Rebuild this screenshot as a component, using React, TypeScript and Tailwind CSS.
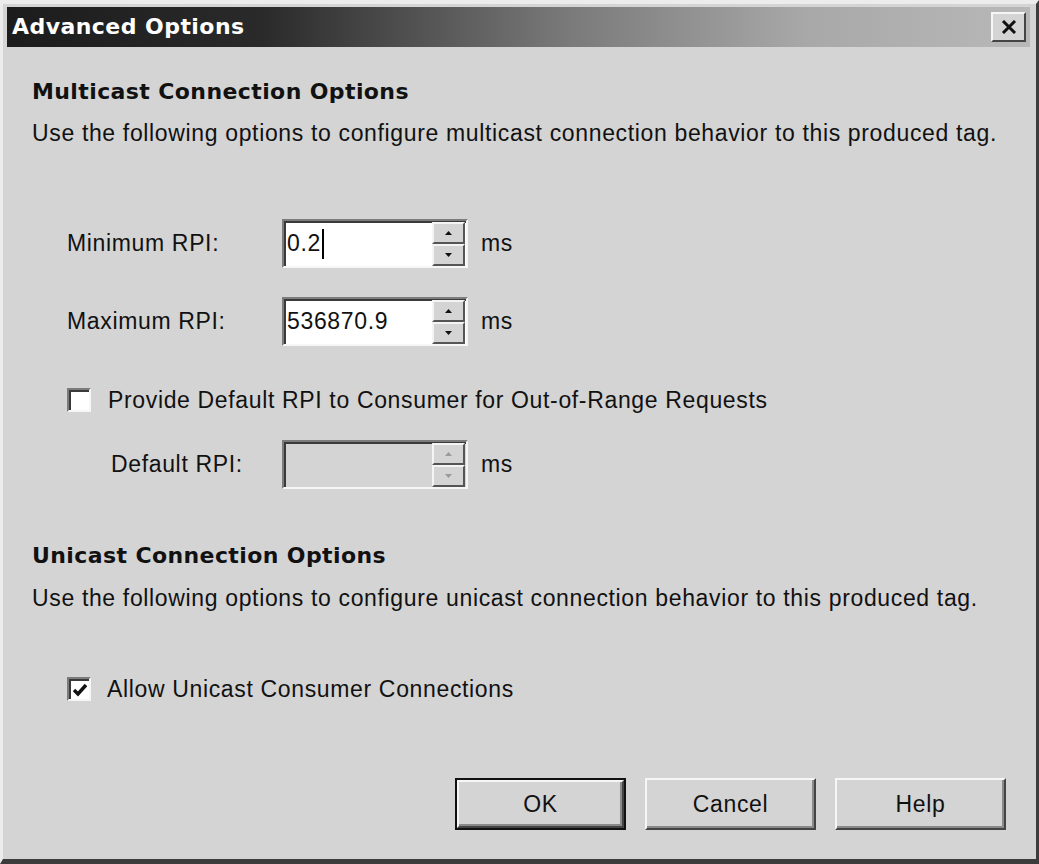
const sans = "font-['Liberation_Sans',Arial,sans-serif] tracking-[0.65px]";
const bold = "font-['DejaVu_Sans',Verdana,sans-serif] font-bold tracking-[0.4px]";

function SpinButton({ up, disabled }: { up?: boolean; disabled?: boolean }) {
  return (
    <div className="flex h-[22px] w-[33px] items-center justify-center border-2 border-t-[#f4f4f4] border-l-[#f4f4f4] border-r-[#555] border-b-[#555] bg-[#d4d4d4]">
      <svg width="7" height="4" viewBox="0 0 7 4">
        {up ? (
          <polygon points="3.5,0 7,4 0,4" fill={disabled ? "#9a9a9a" : "#111"} />
        ) : (
          <polygon points="0,0 7,0 3.5,4" fill={disabled ? "#9a9a9a" : "#111"} />
        )}
      </svg>
    </div>
  );
}

function SpinInput({ value, caret, disabled }: { value?: string; caret?: boolean; disabled?: boolean }) {
  return (
    <div
      className={`flex h-[49px] w-[186px] items-center border-2 border-t-[#7c7c7c] border-l-[#7c7c7c] border-r-[#f6f6f6] border-b-[#f6f6f6] shadow-[inset_2px_2px_0_#3a3a3a] ${
        disabled ? "bg-[#d4d4d4]" : "bg-white"
      }`}
    >
      <div className={`flex flex-1 items-center pl-[3px] text-[23px] text-[#111] ${sans}`}>
        {value}
        {caret && <span className="ml-[1px] h-[30px] w-[2px] bg-black" />}
      </div>
      <div className="mr-[1px] flex flex-col">
        <SpinButton up disabled={disabled} />
        <SpinButton disabled={disabled} />
      </div>
    </div>
  );
}

function Checkbox({ checked }: { checked?: boolean }) {
  return (
    <div className="flex h-[24px] w-[24px] items-center justify-center border-2 border-t-[#7c7c7c] border-l-[#7c7c7c] border-r-[#f6f6f6] border-b-[#f6f6f6] bg-white shadow-[inset_2px_2px_0_#3a3a3a]">
      {checked && (
        <svg width="16" height="14" viewBox="0 0 16 14" className="ml-[1px] mt-[1px]">
          <path d="M2 7 L6 11 L14 2" fill="none" stroke="#111" strokeWidth="3.4" />
        </svg>
      )}
    </div>
  );
}

function Button({ label, isDefault }: { label: string; isDefault?: boolean }) {
  return (
    <div className={`h-[52px] w-[171px] ${isDefault ? "border-2 border-[#111]" : ""}`}>
      <div className="flex h-full w-full items-center justify-center border-2 border-t-[#f6f6f6] border-l-[#f6f6f6] border-r-[#444] border-b-[#444] bg-[#d4d4d4] shadow-[inset_-2px_-2px_0_#8a8a8a]">
        <span className={`text-[23px] text-[#111] ${sans}`}>{label}</span>
      </div>
    </div>
  );
}

export default function App() {
  return (
    <div className="h-[864px] w-[1039px] overflow-hidden border-t-[4px] border-l-[3px] border-r-[3px] border-b-[5px] border-t-[#ececec] border-l-[#ececec] border-r-[#3c3c3c] border-b-[#3c3c3c] bg-[#d4d4d4]">
      <div className="flex h-full flex-col bg-[#d4d4d4]">
        {/* Title bar */}
        <div className="mx-[4px] mt-[3px] flex h-[40px] w-[1023px] items-center justify-between bg-[linear-gradient(to_right,#1c1c1c_0%,#2a2a2a_25%,#7a7a7a_55%,#a8a8a8_78%,#b8b8b8_100%)] pl-[5px] pr-[4px]">
          <span className="font-['DejaVu_Sans',Verdana,sans-serif] text-[22px] font-bold leading-none tracking-[0.45px] text-white">
            Advanced Options
          </span>
          <div className="flex h-[30px] w-[35px] items-center justify-center border-2 border-t-[#f6f6f6] border-l-[#f6f6f6] border-r-[#444] border-b-[#444] bg-[#d4d4d4]">
            <svg width="16" height="14" viewBox="0 0 16 14">
              <path d="M2 1 L14 13 M14 1 L2 13" stroke="#111" strokeWidth="3" />
            </svg>
          </div>
        </div>

        {/* Body */}
        <div className="flex flex-col pl-[29px] pt-[32px] text-[#111]">
          <div className={`h-[26px] text-[22px] leading-[26px] ${bold}`}>Multicast Connection Options</div>
          <div className={`mt-[15px] h-[26px] text-[23px] leading-[26px] ${sans}`}>
            Use the following options to configure multicast connection behavior to this produced tag.
          </div>

          <div className={`mt-[73px] flex h-[49px] items-center text-[23px] ${sans}`}>
            <span className="ml-[35px] w-[215px]">Minimum RPI:</span>
            <SpinInput value="0.2" caret />
            <span className="ml-[13px]">ms</span>
          </div>

          <div className={`mt-[29px] flex h-[49px] items-center text-[23px] ${sans}`}>
            <span className="ml-[35px] w-[215px]">Maximum RPI:</span>
            <SpinInput value="536870.9" />
            <span className="ml-[13px]">ms</span>
          </div>

          <div className={`ml-[35px] mt-[42px] flex h-[24px] items-center gap-[17px] text-[23px] ${sans}`}>
            <Checkbox />
            <span>Provide Default RPI to Consumer for Out-of-Range Requests</span>
          </div>

          <div className={`mt-[28px] flex h-[49px] items-center text-[23px] ${sans}`}>
            <span className="ml-[79px] w-[171px]">Default RPI:</span>
            <SpinInput disabled />
            <span className="ml-[13px]">ms</span>
          </div>

          <div className={`mt-[54px] h-[26px] text-[22px] leading-[26px] ${bold}`}>Unicast Connection Options</div>
          <div className={`mt-[16px] h-[26px] text-[23px] leading-[26px] ${sans}`}>
            Use the following options to configure unicast connection behavior to this produced tag.
          </div>

          <div className={`ml-[35px] mt-[66px] flex h-[24px] items-center gap-[16px] text-[23px] ${sans}`}>
            <Checkbox checked />
            <span>Allow Unicast Consumer Connections</span>
          </div>

          <div className="mt-[77px] flex gap-[19px] pl-[423px]">
            <Button label="OK" isDefault />
            <Button label="Cancel" />
            <Button label="Help" />
          </div>
        </div>
      </div>
    </div>
  );
}
